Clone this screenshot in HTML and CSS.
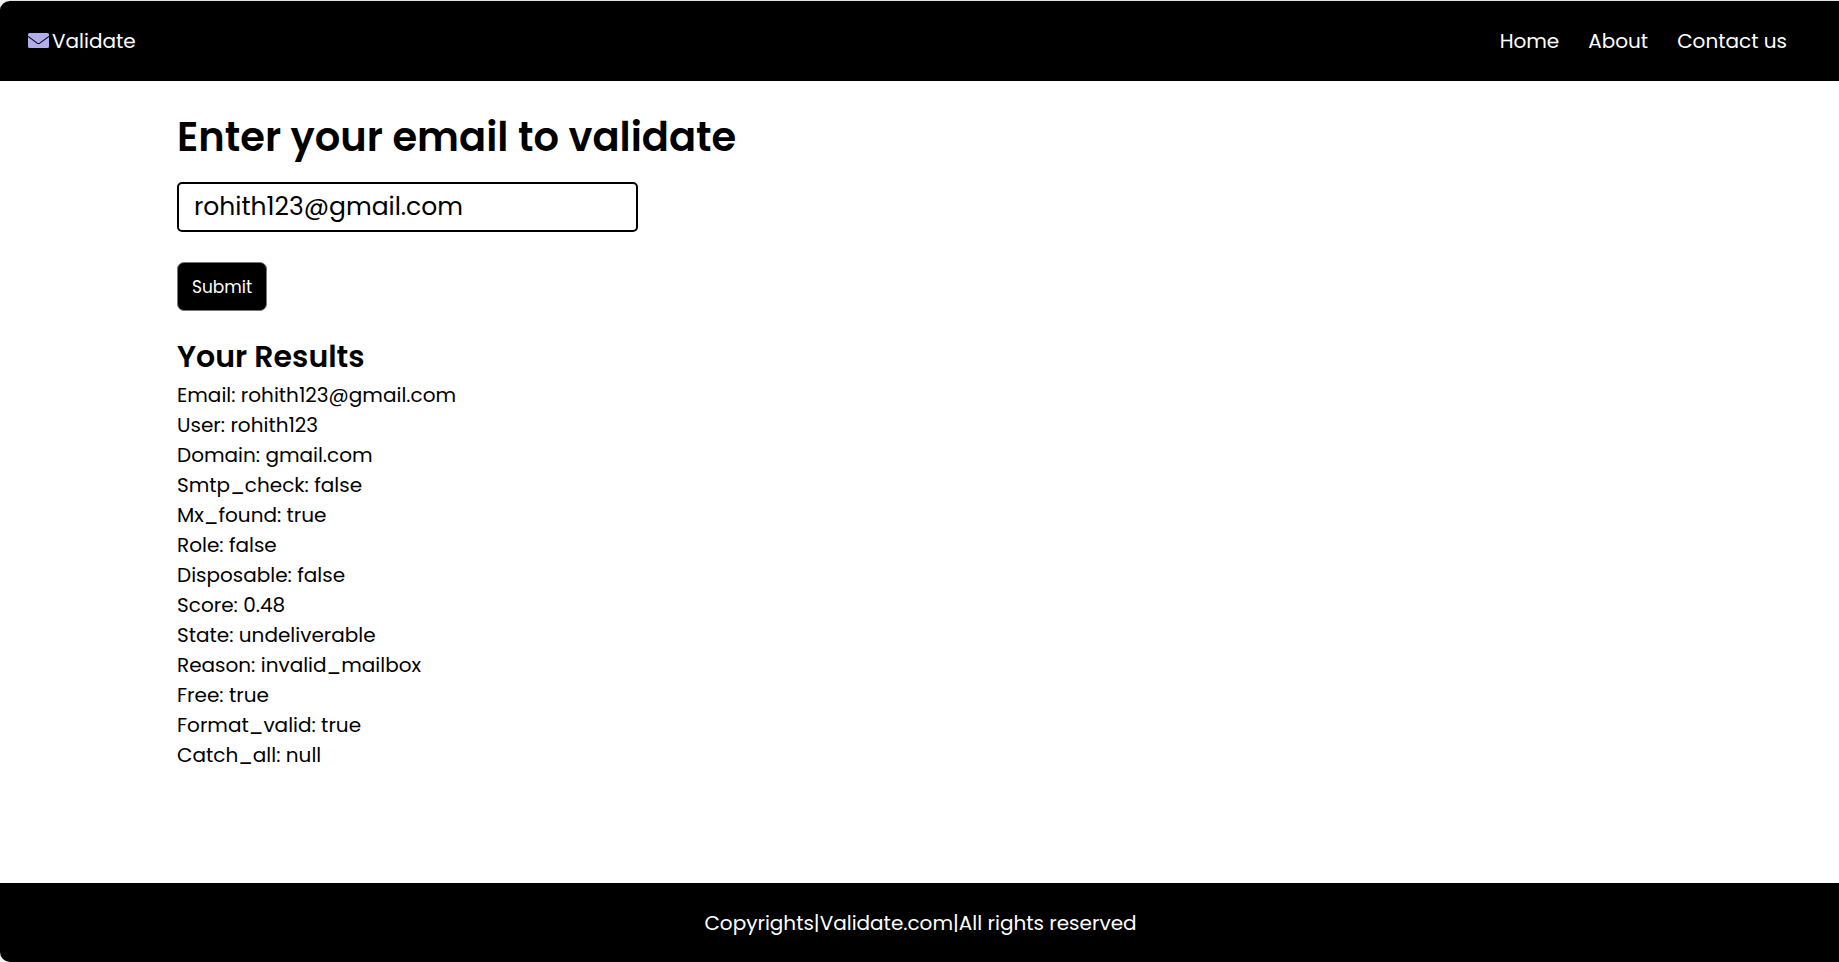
FILE: index.html
```html
<!DOCTYPE html>
<html lang="en">
<head>
<meta charset="utf-8">
<title>Validate</title>
<link rel="stylesheet" href="styles.css">
</head>
<body>
<div class="page">
  <header class="navbar">
    <a class="brand" href="#"><svg class="brand-icon" viewBox="0 0 21 16" aria-hidden="true"><rect width="21" height="15" rx="1.5" fill="#b2aeec"/><path d="M0 3.4 9.2 10.1Q10.5 11 11.8 10.1L21 3.4" fill="none" stroke="#000" stroke-width="1.1"/></svg>Validate</a>
    <nav class="links">
      <a href="#">Home</a>
      <a href="#">About</a>
      <a href="#">Contact us</a>
    </nav>
  </header>
  <main class="content">
    <form class="form">
      <h1 class="title"><label for="email">Enter your email to validate</label></h1>
      <input class="email" id="email" type="text" value="rohith123@gmail.com">
      <button class="submit" type="button">Submit</button>
    </form>
    <section class="results">
      <h2 class="subtitle">Your Results</h2>
      <div>Email: rohith123@gmail.com</div>
      <div>User: rohith123</div>
      <div>Domain: gmail.com</div>
      <div>Smtp_check: false</div>
      <div>Mx_found: true</div>
      <div>Role: false</div>
      <div>Disposable: false</div>
      <div>Score: 0.48</div>
      <div>State: undeliverable</div>
      <div>Reason: invalid_mailbox</div>
      <div>Free: true</div>
      <div>Format_valid: true</div>
      <div>Catch_all: null</div>
    </section>
  </main>
  <footer class="footer">Copyrights|Validate.com|All rights reserved</footer>
</div>
</body>
</html>
```
FILE: styles.css
```css
* {
  box-sizing: border-box;
  margin: 0;
  padding: 0;
}

body {
  background: #f1f3f2;
  color: #000;
  font-family: Poppins, Inter, "Open Sans", sans-serif;
  font-size: 20px;
  line-height: 30px;
}

.page {
  display: flex;
  flex-direction: column;
  min-height: 100vh;
  border-top: 1px solid #dfe3e1;
  border-radius: 10px 0 0 10px;
  background: #fff;
  overflow: hidden;
}

.navbar {
  display: flex;
  align-items: center;
  justify-content: space-between;
  height: 80px;
  padding: 0 52px 0 28px;
  background: #000;
}

.navbar a {
  color: #fff;
  text-decoration: none;
}

.brand {
  display: flex;
  align-items: center;
  gap: 3px;
}

.brand-icon {
  width: 21px;
  height: 16px;
}

.links {
  display: flex;
  gap: 29px;
}

.content {
  flex: 1;
  padding: 26px 177px 0;
}

.form {
  display: flex;
  flex-direction: column;
  align-items: flex-start;
}

.title {
  margin-bottom: 15px;
  font-size: 40px;
  font-weight: 600;
  line-height: 60px;
}

.email {
  width: 100%;
  max-width: 461px;
  height: 50px;
  margin-bottom: 30px;
  padding: 0 15px;
  border: 2px solid #000;
  border-radius: 5px;
  background: #fff;
  color: #000;
  font: inherit;
  font-size: 25px;
}

.submit {
  height: 49px;
  margin-bottom: 23px;
  padding: 0 14px;
  border: 1px solid #767676;
  border-radius: 7px;
  background: #000;
  color: #fff;
  font: inherit;
  font-size: 17px;
}

.subtitle {
  font-size: 30px;
  font-weight: 600;
  line-height: 46px;
}

.footer {
  display: flex;
  align-items: center;
  justify-content: center;
  height: 79px;
  padding-left: 2px;
  background: #000;
  color: #fff;
}
```
